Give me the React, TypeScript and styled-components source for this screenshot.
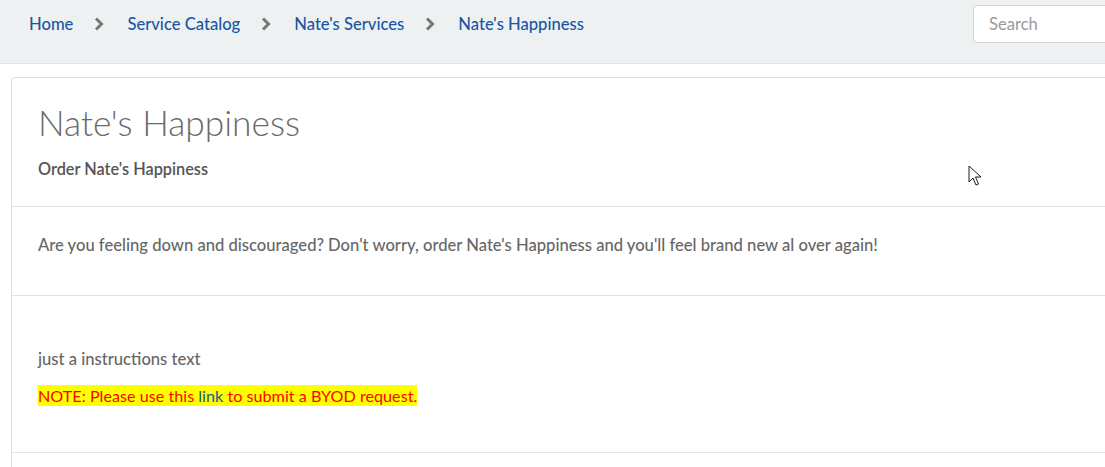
import React from "react";
import styled, { createGlobalStyle } from "styled-components";

const GlobalStyle = createGlobalStyle`
  html, body {
    margin: 0;
    padding: 0;
    background: #ffffff;
    overflow: hidden;
  }
  body {
    font-family: "Lato", "Open Sans", sans-serif;
    color: #666;
  }
`;

const Page = styled.div`
  position: relative;
  width: 1105px;
  height: 467px;
  overflow: hidden;
`;

const TopBar = styled.header`
  display: flex;
  align-items: center;
  height: 64px;
  padding-left: 29px;
  background: #eef1f2;
  border-bottom: 1px solid #dfe3e5;
  box-sizing: border-box;
`;

const Crumbs = styled.nav`
  display: flex;
  align-items: center;
  font-size: 16.6px;
  margin-top: -16px;
`;

const Crumb = styled.a`
  color: #1a56a3;
  text-decoration: none;
  font-weight: 500;
`;

const Sep = styled.span`
  display: inline-flex;
  align-items: center;
  padding: 0 23px 0 21px;
`;

const SearchBox = styled.input`
  margin-left: auto;
  margin-right: -20px;
  margin-top: -16px;
  width: 152px;
  height: 38px;
  box-sizing: border-box;
  border: 1px solid #cfd4d7;
  border-radius: 4px;
  padding: 0 15px;
  font-family: inherit;
  font-size: 16.6px;
  color: #333;
  background: #fff;
  outline: none;
  &::placeholder {
    color: #9a9a9a;
  }
`;

const Content = styled.main`
  padding: 13px 0 0 11px;
`;

const Card = styled.section`
  width: 1120px;
  min-height: 420px;
  border: 1px solid #dcdfe1;
  border-radius: 4px 0 0 0;
  background: #fff;
`;

const Block = styled.div<{ $top: number; $bottom: number }>`
  padding: ${(p) => p.$top}px 26px ${(p) => p.$bottom}px;
  border-bottom: 1px solid #e1e4e6;
`;

const Title = styled.h1`
  margin: 0;
  font-size: 35.3px;
  line-height: 40px;
  font-weight: 300;
  color: #6a6a6a;
`;

const Subtitle = styled.div`
  margin-top: 15px;
  font-size: 16.3px;
  line-height: 22px;
  font-weight: 600;
  color: #555;
`;

const Para = styled.p<{ $gap?: number }>`
  margin: ${(p) => p.$gap ?? 0}px 0 0;
  font-size: 16.6px;
  line-height: 22px;
  font-weight: 500;
  color: #666;
`;

const Note = styled.span`
  background: #ffff00;
  color: #ff0000;
  font-weight: 400;
  font-size: 16.2px;
  padding: 1px 0;
`;

const NoteLink = styled.a`
  color: #1a56a3;
  text-decoration: none;
`;

const Pointer = styled.svg`
  position: absolute;
  left: 968px;
  top: 165px;
`;

const Chevron = () => (
  <svg width="10" height="14" viewBox="0 0 10 14">
    <path d="M2 1.5 L7.5 7 L2 12.5" fill="none" stroke="#777" strokeWidth="3" />
  </svg>
);

const trail = ["Home", "Service Catalog", "Nate's Services", "Nate's Happiness"];

export default function App() {
  return (
    <>
      <GlobalStyle />
      <Page>
        <TopBar>
          <Crumbs>
            {trail.map((t, i) => (
              <React.Fragment key={t}>
                {i > 0 && (
                  <Sep>
                    <Chevron />
                  </Sep>
                )}
                <Crumb href="#">{t}</Crumb>
              </React.Fragment>
            ))}
          </Crumbs>
          <SearchBox placeholder="Search" />
        </TopBar>
        <Content>
          <Card>
            <Block $top={25} $bottom={26}>
              <Title>Nate's Happiness</Title>
              <Subtitle>Order Nate's Happiness</Subtitle>
            </Block>
            <Block $top={27} $bottom={39}>
              <Para>
                Are you feeling down and discouraged? Don't worry, order Nate's Happiness and
                you'll feel brand new al over again!
              </Para>
            </Block>
            <Block $top={52} $bottom={45}>
              <Para>just a instructions text</Para>
              <Para $gap={15}>
                <Note>
                  NOTE: Please use this <NoteLink href="#">link</NoteLink> to submit a BYOD
                  request.
                </Note>
              </Para>
            </Block>
          </Card>
        </Content>
        <Pointer width="14" height="22" viewBox="0 0 14 22">
          <path
            d="M1 1 L1 17 L5 13 L8 20 L10.5 19 L7.5 12 L13 12 Z"
            fill="#fff"
            stroke="#1b1b2e"
            strokeWidth="1"
            strokeLinejoin="round"
          />
        </Pointer>
      </Page>
    </>
  );
}
